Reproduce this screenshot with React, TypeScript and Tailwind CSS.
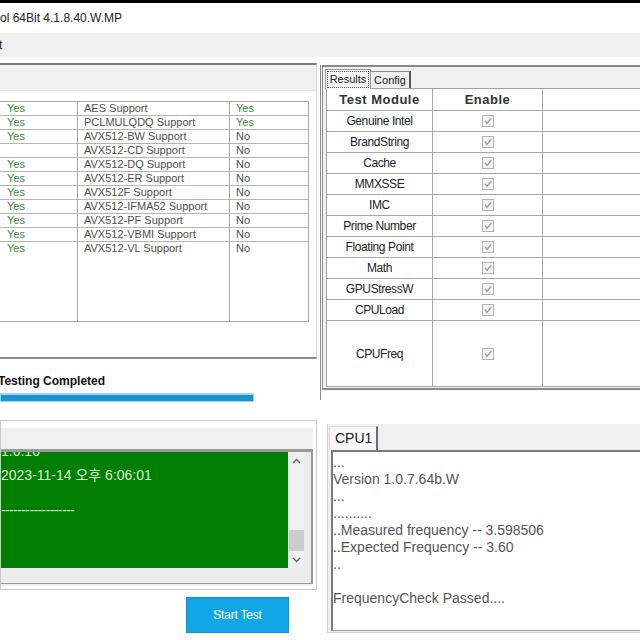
import React from "react";

const leftRows: [string, string, string][] = [
  ["Yes", "AES Support", "Yes"],
  ["Yes", "PCLMULQDQ Support", "Yes"],
  ["Yes", "AVX512-BW Support", "No"],
  ["", "AVX512-CD Support", "No"],
  ["Yes", "AVX512-DQ Support", "No"],
  ["Yes", "AVX512-ER Support", "No"],
  ["Yes", "AVX512F Support", "No"],
  ["Yes", "AVX512-IFMA52 Support", "No"],
  ["Yes", "AVX512-PF Support", "No"],
  ["Yes", "AVX512-VBMI Support", "No"],
  ["Yes", "AVX512-VL Support", "No"],
];

const modules = [
  "Genuine Intel",
  "BrandString",
  "Cache",
  "MMXSSE",
  "IMC",
  "Prime Number",
  "Floating Point",
  "Math",
  "GPUStressW",
  "CPULoad",
];

const logLines = [
  "...",
  "Version 1.0.7.64b.W",
  "...",
  "..........",
  "..Measured frequency -- 3.598506",
  "..Expected Frequency -- 3.60",
  "..",
  "\u00a0",
  "FrequencyCheck Passed....",
];

function Check() {
  return (
    <div className="w-[12px] h-[12px] border border-[#b4b4b4] bg-[#f4f4f4] flex items-center justify-center">
      <svg width="10" height="10" viewBox="0 0 10 10">
        <path d="M2 4.8 L4 7.3 L8.3 2.2" stroke="#a0a0a0" strokeWidth="1.4" fill="none" />
      </svg>
    </div>
  );
}

export default function App() {
  return (
    <div className="w-[640px] h-[640px] overflow-hidden bg-white flex flex-col font-['Liberation_Sans','Noto_Sans_CJK_KR',Arial,sans-serif]">
      {/* black top edge */}
      <div className="h-[3px] bg-black shrink-0" />
      {/* title bar */}
      <div className="h-[30px] shrink-0 flex items-center text-[12px] text-[#222] pl-0">
        ol 64Bit 4.1.8.40.W.MP
      </div>
      {/* menu band */}
      <div className="h-[24px] shrink-0 bg-[#f0f0f0] flex items-center text-[12px] text-[#222]">
        <span className="ml-[-1px]">t</span>
      </div>
      <div className="h-[6px] shrink-0" />

      <div className="flex flex-1">
        {/* LEFT COLUMN */}
        <div className="w-[317px] shrink-0 flex flex-col">
          {/* group A */}
          <div className="h-[296px] border-t-2 border-t-[#7a7a7a] border-r border-r-[#d6d6d6] border-b-2 border-b-[#8a8a8a] flex flex-col">
            <div className="h-[26px] bg-[#f0f0f0] border-b border-[#e4e4e4]" />
            <div className="pt-[10px]">
              <div className="ml-[-1px] w-[310px] h-[221px] border border-[#a8a8a8] flex flex-col text-[11px] text-[#505050]">
                {leftRows.map((r, i) => (
                  <div
                    key={i}
                    className={`h-[14px] flex shrink-0 ${i < leftRows.length - 1 ? "border-b border-[#b4b4b4]" : ""}`}
                  >
                    <div className="w-[78px] border-r border-[#a8a8a8] pl-[7px] leading-[13px] text-[#3d8a3d]">{r[0]}</div>
                    <div className="w-[152px] border-r border-[#a8a8a8] pl-[6px] leading-[13px]">{r[1]}</div>
                    <div className={`flex-1 pl-[6px] leading-[13px] ${r[2] === "Yes" ? "text-[#3d8a3d]" : ""}`}>{r[2]}</div>
                  </div>
                ))}
                <div className="flex flex-1">
                  <div className="w-[78px] border-r border-[#a8a8a8]" />
                  <div className="w-[152px] border-r border-[#a8a8a8]" />
                  <div className="flex-1" />
                </div>
              </div>
            </div>
          </div>

          {/* status */}
          <div className="mt-[15px] h-[14px] text-[12px] leading-[14px] font-bold text-[#111] ml-[-2px]">Testing Completed</div>
          <div className="mt-[5px] w-[254px] h-[9px] border border-[#9ad6f2] border-t-2 bg-[#1b93d1]" />

          {/* group B */}
          <div className="mt-[18px] h-[170px] border border-[#c8c8c8] bg-white pt-[7px] pr-[3px] pb-[3px] flex flex-col">
            <div className="flex-1 bg-[#f0f0f0] pt-[21px] flex flex-col">
              <div className="border-t-[3px] border-r-2 border-b border-[#9a9a9a] bg-[#ececec] flex flex-col">
                <div className="flex">
                  <div className="w-[287px] h-[116px] bg-[#027f02] overflow-hidden text-[14px] leading-[18px] text-[#d8f2d0]">
                    <div className="mt-[-10px] h-[24px]">1:0:10</div>
                    <div>2023-11-14 오후 6:06:01</div>
                    <div className="h-[17px]" />
                    <div className="tracking-[-0.6px]">------------------</div>
                  </div>
                  <div className="w-[17px] h-[116px] bg-[#f0f0f0] flex flex-col items-center">
                    <svg width="9" height="6" viewBox="0 0 9 6" className="mt-[6px]">
                      <path d="M1 5 L4.5 1.5 L8 5" stroke="#606060" strokeWidth="1.3" fill="none" />
                    </svg>
                    <div className="mt-[66px] w-[15px] h-[21px] bg-[#cdcdcd]" />
                    <svg width="9" height="6" viewBox="0 0 9 6" className="mt-[6px]">
                      <path d="M1 1 L4.5 4.5 L8 1" stroke="#606060" strokeWidth="1.3" fill="none" />
                    </svg>
                  </div>
                </div>
                <div className="h-[15px]" />
              </div>
            </div>
          </div>

          {/* button */}
          <div className="mt-[7px] ml-[186px] w-[103px] h-[36px] bg-[#13a6e6] border border-[#0e94d0] flex items-center justify-center text-[12px] text-white tracking-[-0.2px]">
            Start Test
          </div>
        </div>

        {/* RIGHT COLUMN */}
        <div className="flex-1 ml-[3px] flex flex-col">
          <div className="mt-[2px] h-[335px] border-l border-[#8a8a8a] pl-[1px]">
            <div className="h-[325px] border-l border-t-2 border-b-2 border-[#8a8a8a] bg-[#f0f0f0] flex flex-col">
              {/* tabs */}
              <div className="h-[21px] flex items-end pl-[2px] text-[11px] text-[#222]">
                <div className="w-[46px] h-[20px] bg-[#f8f8f8] border-t border-l border-r border-[#9a9a9a] p-[1px] mb-[-1px] relative z-10">
                  <div className="w-full h-full border border-dotted border-[#555] flex items-center justify-center leading-none">
                    Results
                  </div>
                </div>
                <div className="w-[40px] h-[17px] border-t border-r-2 border-[#8a8a8a] border-r-[#555] flex items-center justify-center leading-none">
                  Config
                </div>
              </div>
              {/* table */}
              <div className="ml-[3px] bg-white border-l border-t border-[#a0a0a0] flex flex-col">
                <div className="h-[22px] flex border-b border-[#a8a8a8] text-[13px] font-bold text-[#333] tracking-[0.5px]">
                  <div className="w-[106px] border-r border-[#a8a8a8] flex items-center justify-center">Test Module</div>
                  <div className="w-[110px] border-r border-[#a8a8a8] flex items-center justify-center">Enable</div>
                  <div className="flex-1" />
                </div>
                {modules.map((m) => (
                  <div key={m} className="h-[21px] flex border-b border-[#a8a8a8] text-[12px] text-[#222] tracking-[-0.4px]">
                    <div className="w-[106px] border-r border-[#a8a8a8] flex items-center justify-center">{m}</div>
                    <div className="w-[110px] border-r border-[#a8a8a8] flex items-center justify-center">
                      <Check />
                    </div>
                    <div className="flex-1" />
                  </div>
                ))}
                <div className="h-[66px] flex border-b border-[#a8a8a8] text-[12px] text-[#222] tracking-[-0.4px]">
                  <div className="w-[106px] border-r border-[#a8a8a8] flex items-center justify-center">CPUFreq</div>
                  <div className="w-[110px] border-r border-[#a8a8a8] flex items-center justify-center">
                    <Check />
                  </div>
                  <div className="flex-1" />
                </div>
              </div>
            </div>
          </div>

          {/* CPU1 panel */}
          <div className="mt-[24px] ml-[7px] h-[209px] bg-[#f0f0f0] border-l border-b border-[#cfcfcf] pt-[2px] flex flex-col">
            <div className="h-[24px] flex items-end pl-[1px]">
              <div className="w-[49px] h-[24px] bg-[#f6f6f6] border-t border-l border-[#dcdcdc] border-r-2 border-r-[#6a6a6a] flex items-center pl-[5px] text-[14px] text-[#222]">
                CPU1
              </div>
            </div>
            <div className="ml-[3px] h-[181px] bg-white border-l-2 border-t-2 border-[#7a7a7a] border-b border-b-[#a0a0a0] pt-[2px] text-[14px] leading-[17px] text-[#555]">
              {logLines.map((l, i) => (
                <div key={i} className="pl-[0px]">{l}</div>
              ))}
            </div>
          </div>
        </div>
      </div>
    </div>
  );
}
